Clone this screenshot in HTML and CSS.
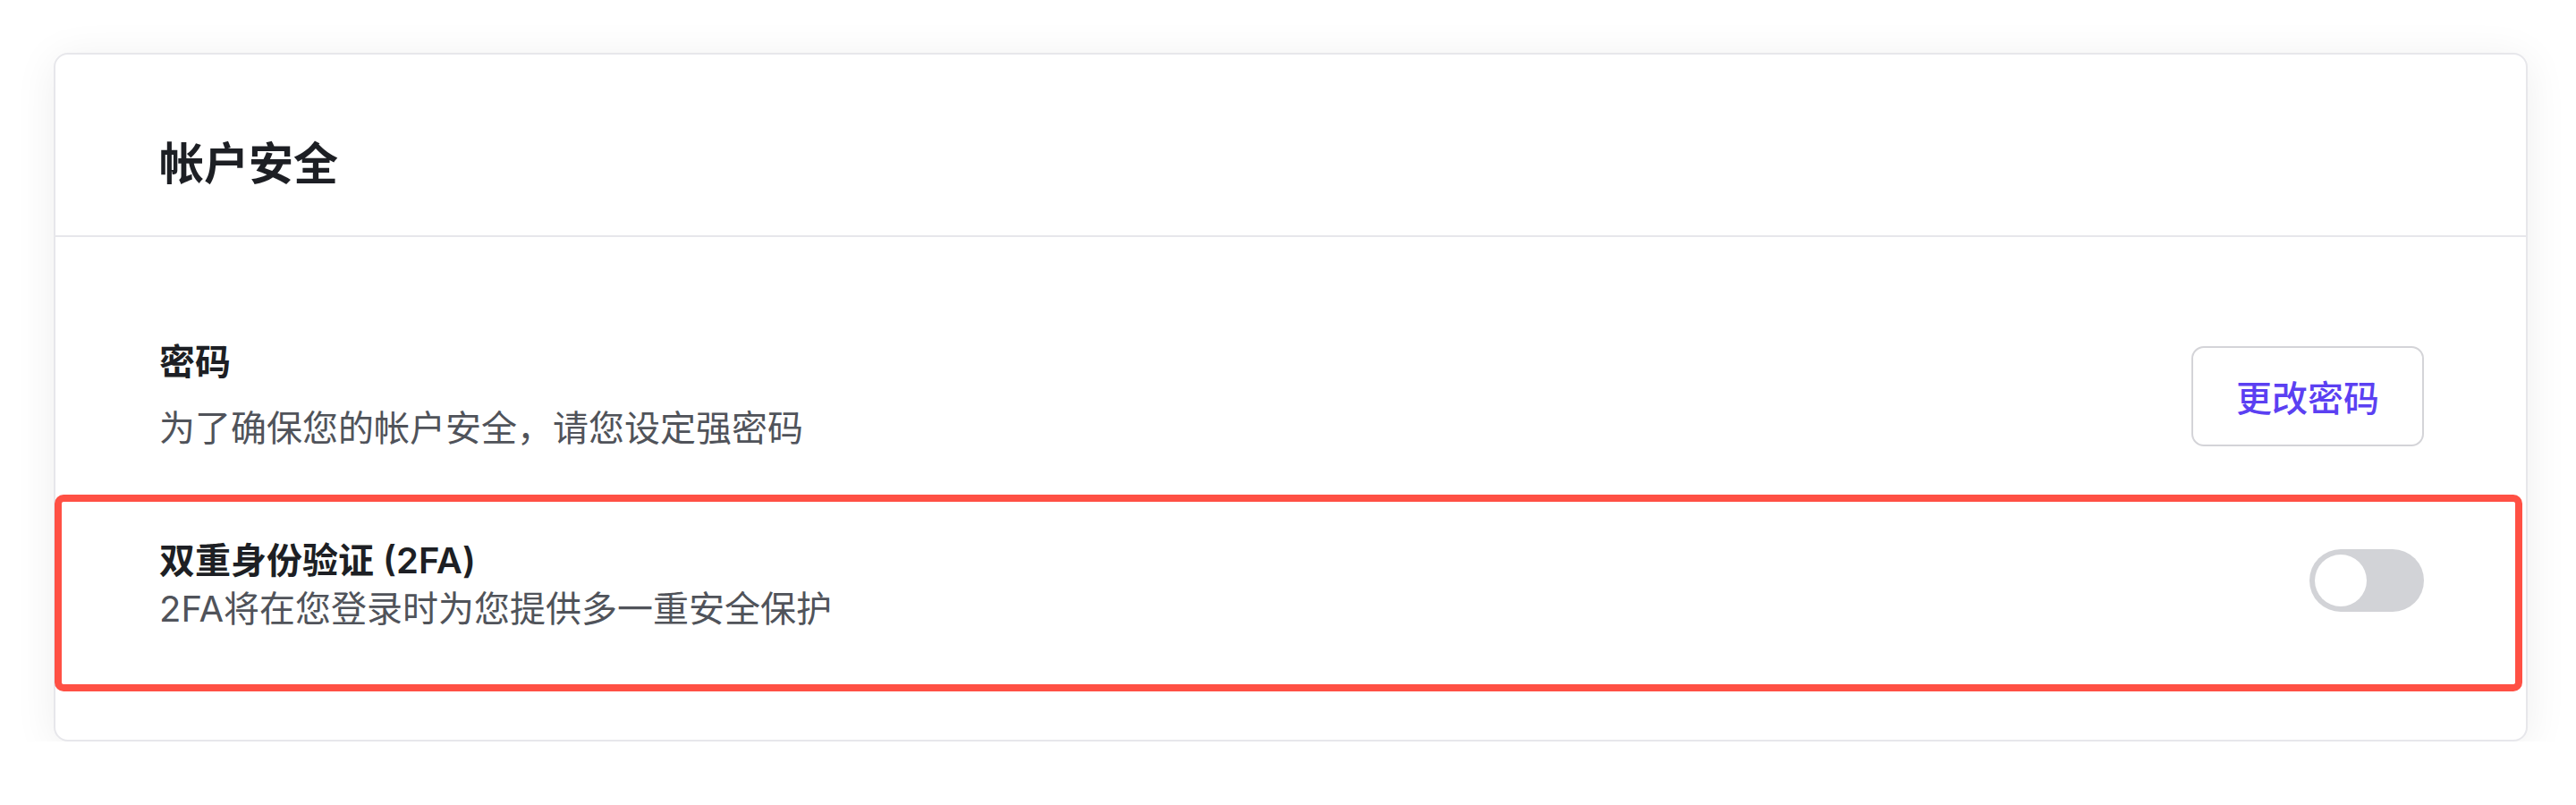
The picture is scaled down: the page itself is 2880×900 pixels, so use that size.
FILE: index.html
```html
<!DOCTYPE html>
<html lang="zh-CN">
<head>
  <meta charset="UTF-8">
  <meta name="viewport" content="width=device-width, initial-scale=1.0">
  <title>帐户安全</title>
  <link rel="stylesheet" href="styles.css">
</head>
<body>
  <div class="card">
    <div class="card-header">
      <h1 class="card-title">帐户安全</h1>
    </div>
    <div class="card-body">
      <div class="row">
        <div class="row-text">
          <div class="row-label">密码</div>
          <div class="row-desc spaced">为了确保您的帐户安全，请您设定强密码</div>
        </div>
        <button class="btn" type="button">更改密码</button>
      </div>

      <div class="row highlight">
        <div class="row-text">
          <div class="row-label tight">双重身份验证 (2FA)</div>
          <div class="row-desc tight">2FA将在您登录时为您提供多一重安全保护</div>
        </div>
        <label class="switch">
          <input type="checkbox">
          <span class="knob"></span>
        </label>
      </div>
    </div>
  </div>
</body>
</html>
```

FILE: styles.css
```css
body {
  margin: 0;
  background: #fff;
  font-family: Inter, "Noto Sans CJK SC", sans-serif;
  color: #1d1f24;
}
.card {
  margin: 59px 54px 0 60px;
  background: #fff;
  border: 2px solid #e7e7eb;
  border-radius: 16px;
  box-shadow: 0 6px 48px rgba(0, 0, 0, 0.07);
}
.card-header {
  padding: 87px 116px 45px;
  border-bottom: 2px solid #e7e7eb;
}
.card-title {
  margin: 0;
  font-size: 50px;
  line-height: 70px;
  font-weight: 600;
}
.card-body {
  padding: 112px 0 54px;
}
.row {
  display: flex;
  align-items: center;
  justify-content: space-between;
  padding: 0 114px 0 116px;
}
.row-label {
  font-size: 40px;
  line-height: 56px;
  font-weight: 600;
}
.row-desc {
  font-size: 40px;
  line-height: 60px;
  color: #50535a;
}
.row-desc.spaced {
  margin-top: 16px;
}
.row-label.tight,
.row-desc.tight {
  line-height: 54px;
}
.highlight {
  margin: 44px 4px 0 -1px;
  padding: 47px 110px 65px 117px;
  border-radius: 10px;
  box-shadow: inset 0 0 0 8px #ff5044;
}
.btn {
  height: 112px;
  padding: 0 48px;
  font-family: inherit;
  font-size: 40px;
  font-weight: 500;
  color: #5b40f2;
  background: #fff;
  border: 2px solid #d4d4d8;
  border-radius: 14px;
  cursor: pointer;
}
.switch {
  display: flex;
  align-items: center;
  width: 128px;
  height: 70px;
  padding: 6px;
  box-sizing: border-box;
  margin-top: -10px;
  background: #d2d3d7;
  border-radius: 35px;
  cursor: pointer;
}
.switch input {
  display: none;
}
.knob {
  width: 58px;
  height: 58px;
  border-radius: 50%;
  background: #fff;
}
```
